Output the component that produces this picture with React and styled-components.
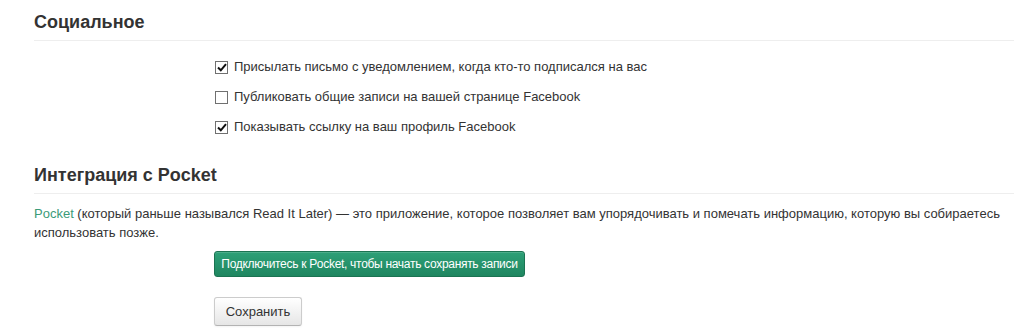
import React from 'react'
import styled, { createGlobalStyle } from 'styled-components'

const GlobalStyle = createGlobalStyle`
    body {
        margin: 0;
        background: #fff;
        font-family: "Liberation Sans", Arial, sans-serif;
        font-size: 13px;
        color: #333;
    }
`

const Page = styled.div`
    padding: 7px 0 0 34px;
`

const Section = styled.section`
    margin-bottom: 24px;
`

const Heading = styled.h3`
    margin: 0;
    padding: 4px 0 7px;
    font-size: 18px;
    line-height: 22px;
    font-weight: bold;
    color: #333;
    border-bottom: 1px solid #eee;
`

const Controls = styled.div`
    margin-left: 181px;
    padding-top: 17px;
    display: flex;
    flex-direction: column;
    gap: 12px;
`

const CheckRow = styled.label`
    display: flex;
    align-items: center;
    gap: 6px;
    line-height: 18px;
    color: #333;
`

const Box = styled.span`
    width: 11px;
    height: 11px;
    border: 1px solid #707070;
    background: #fff;
    display: flex;
    align-items: center;
    justify-content: center;
`

const Text = styled.p`
    margin: 0;
    padding-top: 10px;
    line-height: 19px;
    color: #333;
`

const Link = styled.a`
    color: #3b9b78;
    text-decoration: none;
`

const Actions = styled.div`
    margin-left: 180px;
    padding-top: ${p => p.top}px;
`

const GreenButton = styled.button`
    display: block;
    font-family: "Liberation Sans", Arial, sans-serif;
    font-size: 12px;
    color: #fff;
    width: 311px;
    height: 26px;
    padding: 0;
    border: 1px solid #1b7352;
    border-radius: 3px;
    background: linear-gradient(#2da077, #1f8660);
    box-shadow: inset 0 1px 0 rgba(255, 255, 255, 0.15);
    letter-spacing: -0.3px;
    white-space: nowrap;
`

const PlainButton = styled.button`
    display: block;
    font-family: "Liberation Sans", Arial, sans-serif;
    font-size: 13px;
    color: #333;
    width: 88px;
    height: 29px;
    padding: 0;
    border: 1px solid #ccc;
    border-bottom-color: #b3b3b3;
    border-radius: 3px;
    background: linear-gradient(#fff, #e6e6e6);
    box-shadow: 0 1px 2px rgba(0, 0, 0, 0.05);
`

function Check({ checked, children }) {
    return (
        <CheckRow>
            <Box>
                {checked && (
                    <svg width="10" height="9" viewBox="0 0 10 9">
                        <path
                            d="M1 4.5 L3.8 7.3 L9 1.2"
                            fill="none"
                            stroke="#111"
                            strokeWidth="2"
                        />
                    </svg>
                )}
            </Box>
            {children}
        </CheckRow>
    )
}

export default function App() {
    return (
        <Page>
            <GlobalStyle />
            <Section>
                <Heading>Социальное</Heading>
                <Controls>
                    <Check checked>
                        Присылать письмо с уведомлением, когда кто-то подписался на вас
                    </Check>
                    <Check>Публиковать общие записи на вашей странице Facebook</Check>
                    <Check checked>Показывать ссылку на ваш профиль Facebook</Check>
                </Controls>
            </Section>
            <Section>
                <Heading>Интеграция с Pocket</Heading>
                <Text>
                    <Link href="#">Pocket</Link> (который раньше назывался Read It
                    Later) — это приложение, которое позволяет вам упорядочивать и
                    помечать информацию, которую вы собираетесь использовать позже.
                </Text>
                <Actions top={9}>
                    <GreenButton>
                        Подключитесь к Pocket, чтобы начать сохранять записи
                    </GreenButton>
                </Actions>
                <Actions top={20}>
                    <PlainButton>Сохранить</PlainButton>
                </Actions>
            </Section>
        </Page>
    )
}
